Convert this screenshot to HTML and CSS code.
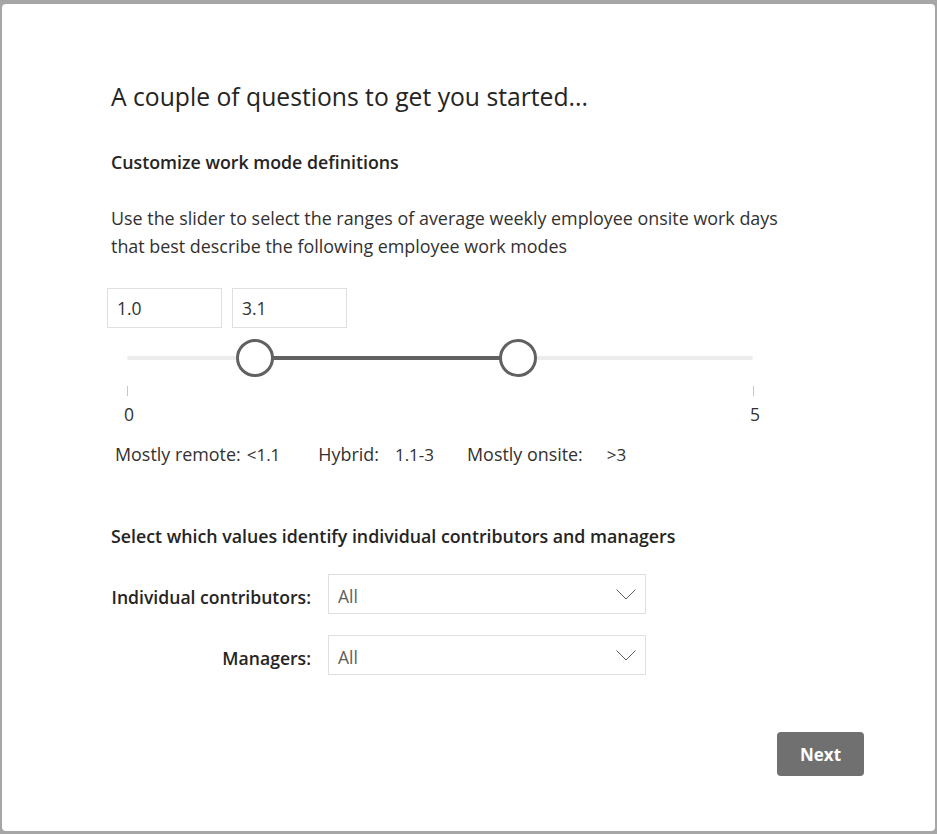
FILE: index.html
```html
<!DOCTYPE html>
<html lang="en">
<head>
<meta charset="utf-8">
<title>A couple of questions</title>
<link rel="stylesheet" href="styles.css">
</head>
<body>
<div class="dialog">
  <h1 class="title">A couple of questions to get you started...</h1>
  <h2 class="section-title">Customize work mode definitions</h2>
  <p class="desc">Use the slider to select the ranges of average weekly employee onsite work days that best describe the following employee work modes</p>

  <div class="range-inputs">
    <div class="num-box">1.0</div>
    <div class="num-box">3.1</div>
  </div>

  <div class="slider">
    <div class="slider-fill" style="left: 20.4%; width: 42.1%;"></div>
    <div class="thumb" style="left: 20.4%;"></div>
    <div class="thumb" style="left: 62.5%;"></div>
  </div>
  <div class="ticks"><span class="tick"></span><span class="tick"></span></div>
  <div class="scale"><span>0</span><span>5</span></div>

  <div class="legend">
    <span class="lg-label">Mostly remote:</span><span class="lg-value v1">&lt;1.1</span>
    <span class="lg-label l2">Hybrid:</span><span class="lg-value v2">1.1-3</span>
    <span class="lg-label l3">Mostly onsite:</span><span class="lg-value v3">&gt;3</span>
  </div>

  <h2 class="section-title second">Select which values identify individual contributors and managers</h2>

  <div class="form-grid">
    <label class="field-label">Individual contributors:</label>
    <div class="dropdown"><span class="dd-value">All</span>
      <svg class="chev" width="20" height="11" viewBox="0 0 20 11"><path d="M0.5 0.5 L10 10 L19.5 0.5" fill="none" stroke="#605e5c" stroke-width="1"/></svg>
    </div>
    <label class="field-label">Managers:</label>
    <div class="dropdown"><span class="dd-value">All</span>
      <svg class="chev" width="20" height="11" viewBox="0 0 20 11"><path d="M0.5 0.5 L10 10 L19.5 0.5" fill="none" stroke="#605e5c" stroke-width="1"/></svg>
    </div>
  </div>

  <div class="actions"><button class="next-btn">Next</button></div>
</div>
</body>
</html>
```
FILE: styles.css
```css
html, body {
  margin: 0;
  padding: 0;
  height: 100%;
}
body {
  background: #a6a6a6;
  font-family: "Open Sans", "Noto Sans", sans-serif;
  color: #323130;
  overflow: hidden;
}
.dialog {
  box-sizing: border-box;
  margin: 4px 2px 0 2px;
  width: 933px;
  height: 827px;
  background: #ffffff;
  border-radius: 4px;
  padding: 77px 71px 0 109px;
  display: flex;
  flex-direction: column;
  align-items: flex-start;
}
.title {
  margin: 0;
  font-size: 24.7px;
  font-weight: 400;
  line-height: 32px;
  color: #252423;
}
.section-title {
  margin: 37px 0 0 0;
  font-size: 17.8px;
  font-weight: 600;
  line-height: 24px;
  color: #252423;
}
.section-title.second {
  margin-top: 57px;
}
.desc {
  margin: 30px 0 0 0;
  max-width: 700px;
  font-size: 17.9px;
  line-height: 28px;
  color: #323130;
}
.range-inputs {
  margin: 28px 0 0 -4px;
  display: flex;
  gap: 10px;
}
.num-box {
  box-sizing: border-box;
  width: 115px;
  height: 40px;
  border: 1px solid #e1dfdd;
  padding: 0 9px;
  font-size: 17.5px;
  line-height: 38px;
  color: #323130;
}
.slider {
  position: relative;
  margin: 28px 0 0 16px;
  width: 626px;
  height: 4px;
  background: #ececec;
  border-radius: 2px;
}
.slider-fill {
  position: absolute;
  top: 0;
  height: 4px;
  background: #616161;
}
.thumb {
  position: absolute;
  top: 2px;
  width: 38px;
  height: 38px;
  box-sizing: border-box;
  border: 3px solid #616161;
  border-radius: 50%;
  background: #ffffff;
  transform: translate(-50%, -50%);
}
.ticks {
  margin: 26px 0 0 16px;
  width: 627px;
  display: flex;
  justify-content: space-between;
}
.tick {
  display: block;
  width: 1px;
  height: 10px;
  background: #c8c6c4;
}
.scale {
  margin: 8px 0 0 13px;
  width: 636px;
  display: flex;
  justify-content: space-between;
  font-size: 17.5px;
  line-height: 20px;
  color: #323130;
}
.legend {
  margin: 18px 0 0 4px;
  display: flex;
  align-items: baseline;
  font-size: 17.9px;
  line-height: 24px;
  color: #323130;
}
.lg-value {
  font-size: 17px;
}
.v1 { margin-left: 6px; }
.l2 { margin-left: 38px; }
.v2 { margin-left: 16px; }
.l3 { margin-left: 33px; }
.v3 { margin-left: 24px; }
.form-grid {
  margin-top: 26px;
  display: grid;
  grid-template-columns: 200px 318px;
  column-gap: 17px;
  row-gap: 21px;
  align-items: center;
}
.field-label {
  justify-self: end;
  padding-top: 6px;
  font-size: 17.6px;
  font-weight: 600;
  color: #252423;
  line-height: 24px;
  white-space: nowrap;
}
.dropdown {
  box-sizing: border-box;
  height: 40px;
  border: 1px solid #e1dfdd;
  padding: 0 9px 0 9px;
  display: flex;
  align-items: center;
  justify-content: space-between;
  font-size: 17.5px;
  color: #605e5c;
}
.dd-value {
  padding-top: 3px;
}
.chev {
  display: block;
}
.actions {
  margin-top: 57px;
  align-self: flex-end;
}
.next-btn {
  width: 87px;
  height: 44px;
  border: none;
  border-radius: 4px;
  background: #707070;
  color: #ffffff;
  font-family: "Open Sans", "Noto Sans", sans-serif;
  font-size: 17px;
  font-weight: 700;
  cursor: pointer;
}
```
